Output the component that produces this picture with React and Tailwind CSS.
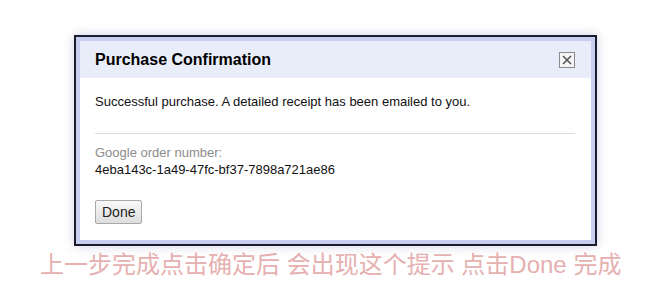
import React from "react";

const CloseBox = () => (
  <button
    aria-label="Close"
    className="w-[16px] h-[16px] border border-[#8a8a8a] bg-[#f4f4f4] flex items-center justify-center"
  >
    <svg width="10" height="10" viewBox="0 0 10 10">
      <path d="M1 1 L9 9 M9 1 L1 9" stroke="#555" strokeWidth="1.6" />
    </svg>
  </button>
);

export default function App() {
  return (
    <div className="w-[649px] h-[283px] bg-white font-['Liberation_Sans',Arial,sans-serif] overflow-hidden">
      <div className="pt-[35px] pl-[74px]">
        {/* Dialog */}
        <div className="w-[523px] border-2 border-[#1c1c2c] shadow-[0_0_10px_rgba(120,130,180,0.35)]">
          <div className="border-4 border-[#c6cff1] bg-white">
            <div className="h-[37px] bg-[#e9edfa] flex items-center justify-between pl-[15px] pr-[16px]">
              <h1 className="text-[16px] font-bold text-black">Purchase Confirmation</h1>
              <CloseBox />
            </div>
            <div className="pl-[15px] pr-[16px] pt-[16px] pb-[16px]">
              <p className="text-[13px] leading-[15px] text-[#111]">
                Successful purchase. A detailed receipt has been emailed to you.
              </p>
              <div className="mt-[24px] border-t border-[#dcdcdc]" />
              <div className="mt-[10px] text-[13px] leading-[17px] text-[#8c8c8c]">
                Google order number:
              </div>
              <div className="text-[13px] leading-[17px] text-[#111]">
                4eba143c-1a49-47fc-bf37-7898a721ae86
              </div>
              <button className="mt-[22px] h-[24px] px-[6px] text-[14px] text-[#222] border border-[#a9a9a9] rounded-[2px] bg-gradient-to-b from-[#f8f8f8] to-[#dedede]">
                Done
              </button>
            </div>
          </div>
        </div>
      </div>
      <div className="mt-[5px] pl-[40px] text-[24px] leading-[28px] text-[#e6b0b0] font-['Liberation_Sans','Noto_Sans_CJK_SC',sans-serif] whitespace-nowrap">
        上一步完成点击确定后 会出现这个提示 点击Done 完成
      </div>
    </div>
  );
}
